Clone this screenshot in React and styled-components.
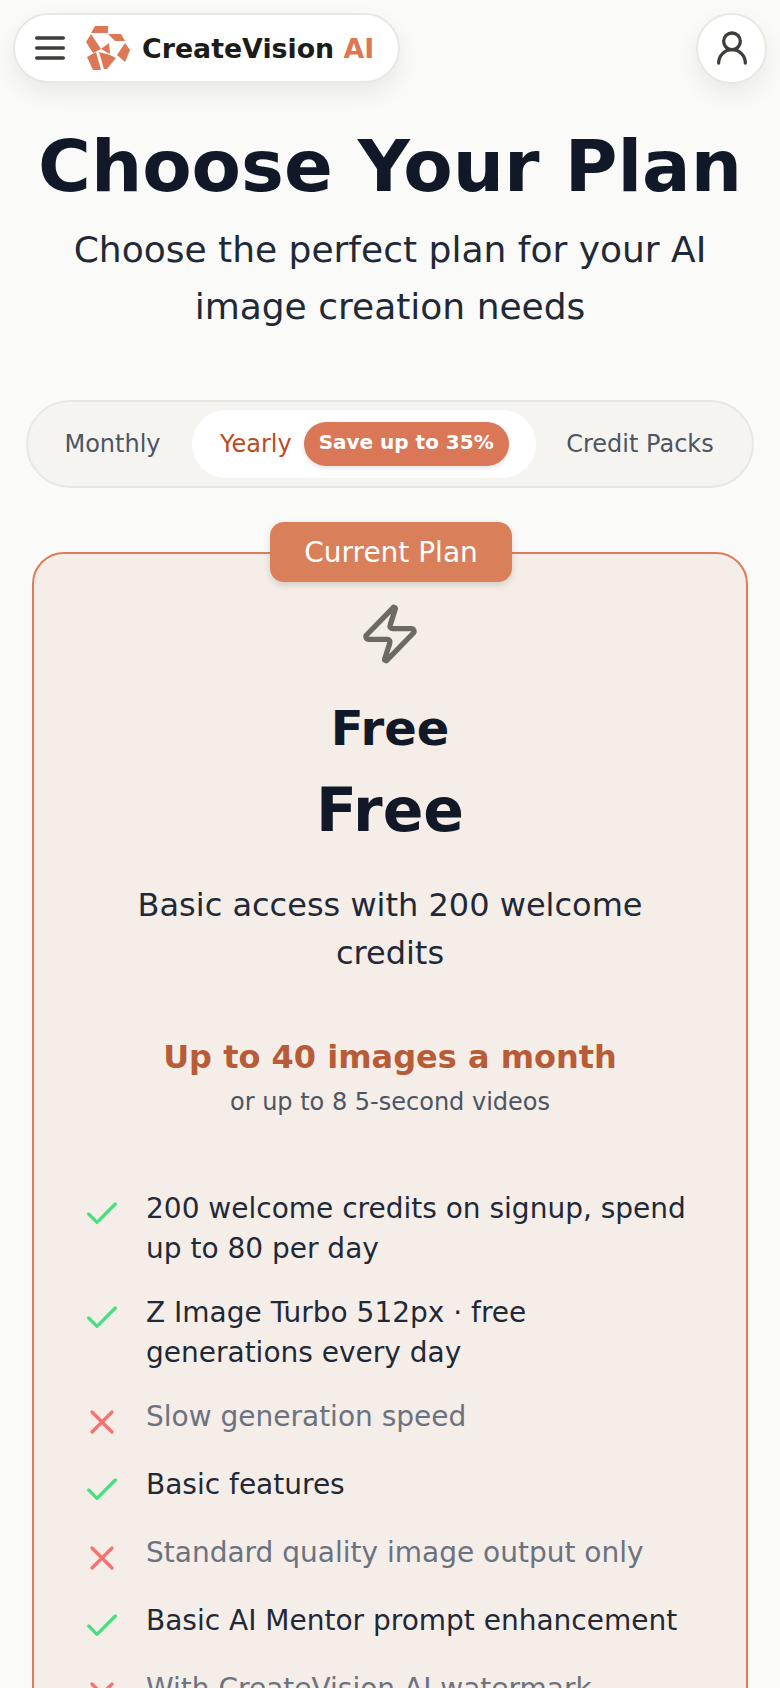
import React from "react";
import styled, { createGlobalStyle } from "styled-components";

const Global = createGlobalStyle`
  html, body { margin: 0; padding: 0; background: #fafaf8; }
  body { font-family: "DejaVu Sans", sans-serif; }
  * { box-sizing: border-box; }
`;
const Page = styled.div`
  width: 780px; height: 1688px; overflow: hidden; background: #fafaf8;
  padding: 13px 13px 0;
`;
const TopBar = styled.header`
  display: flex; justify-content: space-between; align-items: center; height: 70px;
`;
const BrandPill = styled.div`
  width: 387px; height: 70px; border-radius: 35px; background: #fff;
  border: 2px solid #e8e8e2; display: flex; align-items: center; padding-left: 15px; gap: 16px;
  box-shadow: 0 10px 25px rgba(0,0,0,.07);
`;
const MenuButton = styled.div`
  display: flex; align-items: center; justify-content: center; color: #3d3d3a;
`;
const BrandLink = styled.div`
  display: flex; align-items: center; gap: 12px;
`;
const Brand = styled.div`
  font-size: 26.8px; font-weight: 700; color: #1c1c1a; white-space: nowrap;
  span { color: #dd7755; }
`;
const Avatar = styled.div`
  width: 71px; height: 71px; border-radius: 50%; background: #fff; border: 2px solid #e8e8e2;
  display: flex; align-items: center; justify-content: center; color: #3d3d3a;
  box-shadow: 0 10px 25px rgba(0,0,0,.07);
`;
const Title = styled.h1`
  margin: 43px 0 0; text-align: center; font-size: 72px; line-height: 80px; font-weight: 700; color: #111827;
  white-space: nowrap;
`;
const Subtitle = styled.p`
  margin: 15px auto 0; width: 660px; text-align: center; font-size: 36px; line-height: 57px; color: #1f2937;
`;
const Tabs = styled.div`
  margin: 65px 13px 0; height: 88px; border-radius: 44px; background: #f5f4f0; border: 2px solid #e8e8e2;
  display: flex; align-items: center; padding: 0 8px;
`;
const Tab = styled.div`
  font-size: 24px; color: #4b5563; white-space: nowrap; text-align: center;
  flex: ${p => p.$flex};
  padding-right: ${p => p.$nudge || 0}px;
`;
const ActiveTab = styled.div`
  width: 344px; height: 68px; border-radius: 34px; background: #fff; display: flex; align-items: center;
  padding-left: 28px; gap: 12px; font-size: 24px; color: #bd4b1e; white-space: nowrap;
`;
const Save = styled.span`
  width: 205px; height: 44px; border-radius: 22px; background: #d97757; color: #fff; font-size: 20px; font-weight: 700;
  display: flex; align-items: center; justify-content: center; padding-bottom: 4px;
  box-shadow: 0 2px 5px rgba(0,0,0,.12);
`;
const Card = styled.section`
  position: relative; margin: 64px 19px 0; border: 2px solid #dd7d5b; border-radius: 32px; background: #f5ede7;
  height: 1200px; padding: 48px 50px 0; display: flex; flex-direction: column; align-items: center;
`;
const CurrentBadge = styled.div`
  position: absolute; top: -32px; left: 236px; width: 242px; height: 60px; border-radius: 14px;
  background: #d97f5a; color: #fff; font-size: 28px; display: flex; align-items: center; justify-content: center;
  box-shadow: 0 3px 7px rgba(0,0,0,.14);
`;
const PlanName = styled.h2`
  margin: 26px 0 0; font-size: 48px; line-height: 72px; font-weight: 700; color: #111827;
`;
const Price = styled.div`
  margin-top: 10px; font-size: 60px; line-height: 72px; font-weight: 700; color: #111827;
`;
const Desc = styled.p`
  margin: 35px 0 0; text-align: center; font-size: 32px; line-height: 48px; color: #1f2937; width: 560px;
`;
const Credits = styled.div`
  margin-top: 56px; font-size: 32px; line-height: 48px; font-weight: 700; color: #b85c38; white-space: nowrap;
`;
const Sub = styled.div`
  margin-top: 3px; font-size: 24px; line-height: 36px; color: #4b5563; white-space: nowrap;
`;
const List = styled.ul`
  list-style: none; margin: 69px 0 0; padding: 0; width: 100%; display: flex; flex-direction: column; gap: 24px;
`;
const Item = styled.li`
  display: flex; gap: 24px; min-height: 44px; font-size: 28px; line-height: 40px;
  color: ${p => p.$off ? "#6b7280" : "#1f2937"};
  svg { flex: none; margin: 5px 0 -1px -2px; }
`;

const Check = () => (
  <svg width="40" height="40" viewBox="0 0 24 24" fill="none" stroke="#4ade80" strokeWidth="2" strokeLinecap="round" strokeLinejoin="round"><path d="M20 6 9 17l-5-5" /></svg>
);
const Cross = () => (
  <svg width="40" height="40" viewBox="0 0 24 24" fill="none" stroke="#f87171" strokeWidth="2" strokeLinecap="round" strokeLinejoin="round"><path d="M18 6 6 18M6 6l12 12" /></svg>
);
const Logo = () => (
  <svg width="44" height="44" viewBox="0 0 44 44" fill="#dd7755">
    <path d="M9 0h13v7H5z" />
    <path d="M22 8h13l4 7H29z" />
    <path d="M0 16 5 8l10 15-8 4z" />
    <path d="M15 23 23 17l1 11z" />
    <path d="M39 17l5 7-5 12-8-7z" />
    <path d="M1 31l9-5 5 18H7z" />
    <path d="M13 26l11 3 6 3-9 11h-3z" />
  </svg>
);

const features = [
  ["200 welcome credits on signup, spend up to 80 per day"],
  ["Z Image Turbo 512px · free generations every day"],
  ["Slow generation speed", true],
  ["Basic features"],
  ["Standard quality image output only", true],
  ["Basic AI Mentor prompt enhancement"],
  ["With CreateVision AI watermark", true],
];

export default function App() {
  return (
    <Page>
      <Global />
      <TopBar>
        <BrandPill>
          <MenuButton>
            <svg width="40" height="40" viewBox="0 0 24 24" fill="none" stroke="currentColor" strokeWidth="2" strokeLinecap="round"><path d="M4 6h16M4 12h16M4 18h16" /></svg>
          </MenuButton>
          <BrandLink>
            <Logo />
            <Brand>CreateVision <span>AI</span></Brand>
          </BrandLink>
        </BrandPill>
        <Avatar>
          <svg width="40" height="40" viewBox="0 0 24 24" fill="none" stroke="currentColor" strokeWidth="2" strokeLinecap="round"><circle cx="12" cy="8" r="5" /><path d="M20 21a8 8 0 0 0-16 0" /></svg>
        </Avatar>
      </TopBar>
      <Title>Choose Your Plan</Title>
      <Subtitle>Choose the perfect plan for your AI image creation needs</Subtitle>
      <Tabs>
        <Tab $flex="0 0 156px" $nudge={3}>Monthly</Tab>
        <ActiveTab>Yearly<Save>Save up to 35%</Save></ActiveTab>
        <Tab $flex="1">Credit Packs</Tab>
      </Tabs>
      <Card>
        <CurrentBadge>Current Plan</CurrentBadge>
        <svg width="64" height="64" viewBox="0 0 24 24" fill="none" stroke="#6b6b63" strokeWidth="2" strokeLinecap="round" strokeLinejoin="round"><path d="M4 14a1 1 0 0 1-.78-1.63l9.9-10.2a.5.5 0 0 1 .86.46l-1.92 6.02A1 1 0 0 0 13 10h7a1 1 0 0 1 .78 1.63l-9.9 10.2a.5.5 0 0 1-.86-.46l1.92-6.02A1 1 0 0 0 11 14z" /></svg>
        <PlanName>Free</PlanName>
        <Price>Free</Price>
        <Desc>Basic access with 200 welcome credits</Desc>
        <Credits>Up to 40 images a month</Credits>
        <Sub>or up to 8 5-second videos</Sub>
        <List>
          {features.map(([t, off]) => (
            <Item key={t} $off={off}>{off ? <Cross /> : <Check />}<span>{t}</span></Item>
          ))}
        </List>
      </Card>
    </Page>
  );
}
